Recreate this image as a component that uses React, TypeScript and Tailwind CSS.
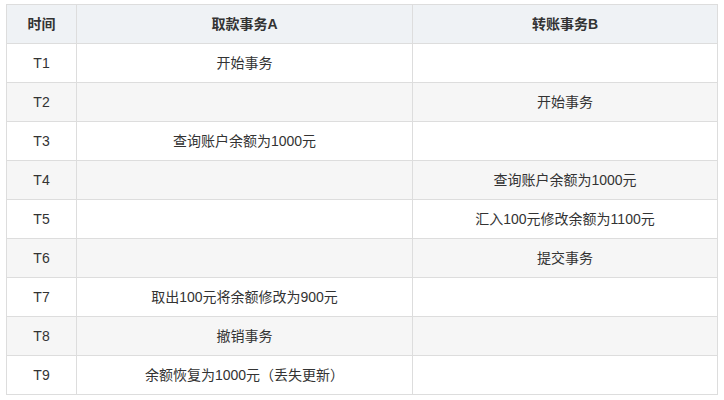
import React from "react";

const rows: [string, string, string][] = [
  ["T1", "开始事务", ""],
  ["T2", "", "开始事务"],
  ["T3", "查询账户余额为1000元", ""],
  ["T4", "", "查询账户余额为1000元"],
  ["T5", "", "汇入100元修改余额为1100元"],
  ["T6", "", "提交事务"],
  ["T7", "取出100元将余额修改为900元", ""],
  ["T8", "撤销事务", ""],
  ["T9", "余额恢复为1000元（丢失更新）", ""],
];

export default function App() {
  return (
    <div
      className="w-[724px] h-[400px] bg-white pl-[6px] pt-[4px]"
      style={{ fontFamily: '"Liberation Sans", "Noto Sans CJK SC", sans-serif' }}
    >
      <table className="border-collapse w-[712px] text-[14px] text-[#333]">
        <colgroup>
          <col className="w-[70px]" />
          <col className="w-[336px]" />
          <col />
        </colgroup>
        <thead>
          <tr className="bg-[#eff2f5] h-[39px]">
            <th className="border border-[#dddddd] font-bold text-center">时间</th>
            <th className="border border-[#dddddd] font-bold text-center">取款事务A</th>
            <th className="border border-[#dddddd] font-bold text-center">转账事务B</th>
          </tr>
        </thead>
        <tbody>
          {rows.map((r, i) => (
            <tr key={r[0]} className={`h-[39px] ${i % 2 === 1 ? "bg-[#f6f6f6]" : "bg-white"}`}>
              <td className="border border-[#dddddd] text-center">{r[0]}</td>
              <td className="border border-[#dddddd] text-center">{r[1]}</td>
              <td className="border border-[#dddddd] text-center">{r[2]}</td>
            </tr>
          ))}
        </tbody>
      </table>
    </div>
  );
}
